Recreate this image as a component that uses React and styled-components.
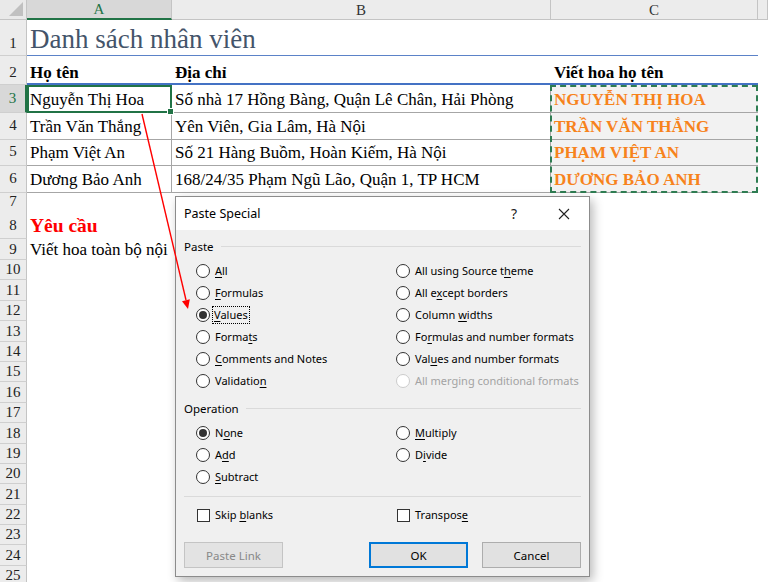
import React from 'react';
import styled, { createGlobalStyle } from 'styled-components';

const GlobalStyle = createGlobalStyle`
  html, body {
    margin: 0;
    padding: 0;
    background: #fff;
  }
  body {
    width: 768px;
    height: 582px;
    overflow: hidden;
    font-family: "Liberation Serif", "Times New Roman", serif;
  }
`;

const COLS = '27px 145px 379px 207px 1fr';

const Page = styled.div`
  position: relative;
  width: 768px;
  height: 582px;
  overflow: hidden;
`;

const Sheet = styled.div`
  display: flex;
  flex-direction: column;
`;

const Row = styled.div`
  display: grid;
  grid-template-columns: ${COLS};
  height: ${p => p.$h}px;
  flex: none;
`;

const Corner = styled.div`
  position: relative;
  background: #e9e9e9;
  border-right: 1px solid #c4c4c4;
  border-bottom: 1px solid #c4c4c4;
  &::after {
    content: '';
    position: absolute;
    right: 3px;
    bottom: 3px;
    border-left: 14px solid transparent;
    border-bottom: 14px solid #c0c0c0;
  }
`;

const ColHead = styled.div`
  box-sizing: border-box;
  display: flex;
  align-items: center;
  justify-content: center;
  background: ${p => (p.$active ? '#d8d8d8' : '#ececec')};
  color: ${p => (p.$active ? '#217346' : '#333')};
  border-right: 1px solid #c4c4c4;
  border-bottom: ${p => (p.$active ? '2px solid #217346' : '1px solid #c4c4c4')};
  font-size: 15px;
  padding-top: 1px;
`;

const RowHead = styled.div`
  box-sizing: border-box;
  display: flex;
  align-items: flex-end;
  justify-content: center;
  padding-bottom: ${p => p.$pb ?? 1}px;
  background: ${p => (p.$active ? '#d8d8d8' : '#ececec')};
  color: ${p => (p.$active ? '#217346' : '#222')};
  border-right: ${p => (p.$active ? '2px solid #217346' : '1px solid #c4c4c4')};
  border-bottom: 1px solid #cfcfcf;
  font-size: 15px;
  line-height: 17px;
`;

const Cell = styled.div`
  box-sizing: border-box;
  position: relative;
  display: flex;
  align-items: flex-end;
  padding: 0 0 ${p => p.$pb ?? 3}px 3px;
  white-space: nowrap;
  font-size: ${p => p.$size ?? 17}px;
  line-height: ${p => (p.$size ? p.$size + 3 : 19)}px;
  font-weight: ${p => (p.$bold ? 700 : 400)};
  color: ${p => p.$color ?? '#000'};
  background: ${p => p.$bg ?? 'transparent'};
  border-bottom: ${p => p.$bb ?? 'none'};
  border-right: ${p => p.$br ?? 'none'};
  z-index: ${p => (p.$over ? 1 : 0)};
`;

const ActiveCell = styled(Cell)`
  outline: 2px solid #217346;
  outline-offset: -2px;
  z-index: 2;
  &::after {
    content: '';
    position: absolute;
    right: -3px;
    bottom: -3px;
    width: 5px;
    height: 5px;
    background: #217346;
    border: 1px solid #fff;
  }
`;

const Marquee = styled.div`
  position: absolute;
  left: 550px;
  top: 85px;
  width: 208px;
  height: 108px;
  box-sizing: border-box;
  border: 2px dashed #2e7d52;
  pointer-events: none;
`;

const Overlay = styled.svg`
  position: absolute;
  left: 0;
  top: 0;
  pointer-events: none;
  z-index: 5;
`;

/* ---------- dialog ---------- */

const Dialog = styled.div`
  position: absolute;
  left: 175px;
  top: 196px;
  width: 415px;
  height: 381px;
  box-sizing: border-box;
  border: 1px solid #8c8c8c;
  background: #f0f0f0;
  box-shadow: 3px 4px 10px rgba(0, 0, 0, 0.28);
  font-family: "Noto Sans", "Open Sans", sans-serif;
  font-size: 11px;
  color: #000;
  display: flex;
  flex-direction: column;
  z-index: 3;
`;

const TitleBar = styled.div`
  height: 33px;
  flex: none;
  background: #fff;
  display: flex;
  align-items: center;
  padding-left: 8px;
  font-size: 12.5px;
`;

const Title = styled.div`
  flex: 1;
`;

const TitleBtn = styled.div`
  width: 50px;
  height: 33px;
  display: flex;
  align-items: center;
  justify-content: center;
  font-size: 14px;
  color: #222;
`;

const Body = styled.div`
  padding: 0 8px;
  display: flex;
  flex-direction: column;
`;

const SectionHead = styled.div`
  display: flex;
  align-items: center;
  gap: 7px;
  height: 22px;
  margin-top: 5px;
  font-size: 11.5px;
  &::after {
    content: '';
    flex: 1;
    border-top: 1px solid #dadada;
    margin-top: 1px;
  }
`;

const OptionGrid = styled.div`
  display: grid;
  grid-template-columns: 200px 1fr;
  grid-auto-rows: 22px;
  padding-left: 12px;
  margin-top: ${p => p.$mt ?? 3}px;
`;

const Option = styled.div`
  display: flex;
  align-items: center;
  gap: 5px;
  color: ${p => (p.$disabled ? '#a3a3a3' : '#000')};
  white-space: nowrap;
`;

const Radio = styled.span`
  box-sizing: border-box;
  width: 14px;
  height: 14px;
  flex: none;
  border-radius: 50%;
  border: 1px solid ${p => (p.$disabled ? '#cccccc' : '#333')};
  background: #fff;
  display: flex;
  align-items: center;
  justify-content: center;
  &::after {
    content: '';
    display: ${p => (p.$checked ? 'block' : 'none')};
    width: 8px;
    height: 8px;
    border-radius: 50%;
    background: #333;
  }
`;

const Check = styled.span`
  box-sizing: border-box;
  width: 13px;
  height: 13px;
  flex: none;
  margin-left: 1px;
  border: 1px solid #333;
  background: #fff;
`;

const Label = styled.span`
  outline: ${p => (p.$focus ? '1px dotted #000' : 'none')};
  padding: ${p => (p.$focus ? '0 1px' : '0')};
  margin-left: ${p => (p.$focus ? '-2px' : '0')};
  line-height: 16px;
`;

const Key = styled.span`
  text-decoration: underline;
  text-underline-offset: 2px;
`;

const Divider = styled.div`
  border-top: 1px solid #dadada;
  margin-top: 8px;
`;

const ButtonRow = styled.div`
  display: flex;
  justify-content: space-between;
  margin-top: 16px;
`;

const ButtonGroup = styled.div`
  display: flex;
  gap: 14px;
`;

const Button = styled.div`
  box-sizing: border-box;
  width: 99px;
  height: 26px;
  display: flex;
  align-items: center;
  justify-content: center;
  font-size: 11.5px;
  background: ${p => (p.$disabled ? '#e3e3e3' : '#e1e1e1')};
  color: ${p => (p.$disabled ? '#888' : '#000')};
  border: ${p =>
    p.$primary ? '2px solid #0078d7' : p.$disabled ? '1px solid #c4c4c4' : '1px solid #adadad'};
`;

const rowsAfter = Array.from({ length: 16 }, (_, i) => i + 10);

const pasteOptions = [
  [<><Key>A</Key>ll</>],
  [<>All using Source t<Key>h</Key>eme</>],
  [<><Key>F</Key>ormulas</>],
  [<>All e<Key>x</Key>cept borders</>],
  [<><Key>V</Key>alues</>, { checked: true, focus: true }],
  [<>Column <Key>w</Key>idths</>],
  [<>Forma<Key>t</Key>s</>],
  [<>Fo<Key>r</Key>mulas and number formats</>],
  [<><Key>C</Key>omments and Notes</>],
  [<>Val<Key>u</Key>es and number formats</>],
  [<>Validatio<Key>n</Key></>],
  [<>All merging conditional formats</>, { disabled: true }],
];

const opOptions = [
  [<>N<Key>o</Key>ne</>, { checked: true }],
  [<><Key>M</Key>ultiply</>],
  [<>A<Key>d</Key>d</>],
  [<>D<Key>i</Key>vide</>],
  [<><Key>S</Key>ubtract</>],
];

const data = [
  ['Nguyễn Thị Hoa', 'Số nhà 17 Hồng Bàng, Quận Lê Chân, Hải Phòng', 'NGUYỄN THỊ HOA', 28],
  ['Trần Văn Thắng', 'Yên Viên, Gia Lâm, Hà Nội', 'TRẦN VĂN THẮNG', 27],
  ['Phạm Việt An', 'Số 21 Hàng Buồm, Hoàn Kiếm, Hà Nội', 'PHẠM VIỆT AN', 26],
  ['Dương Bảo Anh', '168/24/35 Phạm Ngũ Lão, Quận 1, TP HCM', 'DƯƠNG BẢO ANH', 27],
];

const GRID = '1px solid #a6a6a6';

function OptionList({ items }) {
  return items.map(([label, opt = {}], i) => (
    <Option key={i} $disabled={opt.disabled}>
      <Radio $checked={opt.checked} $disabled={opt.disabled} />
      <Label $focus={opt.focus}>{label}</Label>
    </Option>
  ));
}

export default function App() {
  return (
    <Page>
      <GlobalStyle />
      <Sheet>
        <Row $h={20}>
          <Corner />
          <ColHead $active>A</ColHead>
          <ColHead>B</ColHead>
          <ColHead>C</ColHead>
          <ColHead />
        </Row>
        <Row $h={36}>
          <RowHead $pb={3}>1</RowHead>
          <Cell $size={27} $color="#44546a" $pb={1} $bb="1px solid #5b82c8" $over>Danh sách nhân viên</Cell>
          <Cell $bb="1px solid #5b82c8" />
          <Cell $bb="1px solid #5b82c8" />
          <Cell />
        </Row>
        <Row $h={29}>
          <RowHead $pb={3}>2</RowHead>
          <Cell $bold $bb="2px solid #4472c4" $pb={1}>Họ tên</Cell>
          <Cell $bold $bb="2px solid #4472c4" $pb={1}>Địa chỉ</Cell>
          <Cell $bold $bb="2px solid #4472c4" $pb={1}>Viết hoa họ tên</Cell>
          <Cell />
        </Row>
        {data.map(([name, addr, upper, h], i) => {
          const NameCell = i === 0 ? ActiveCell : Cell;
          return (
            <Row $h={h} key={name}>
              <RowHead $active={i === 0} $pb={5}>{i + 3}</RowHead>
              <NameCell $bb={GRID} $br={GRID} $pb={3}>{name}</NameCell>
              <Cell $bb={GRID} $br={GRID} $pb={3}>{addr}</Cell>
              <Cell $bb={GRID} $bg="#f2f2f2" $bold $color="#f7831c" $pb={3}>{upper}</Cell>
              <Cell />
            </Row>
          );
        })}
        <Row $h={17}>
          <RowHead>7</RowHead>
          <Cell /><Cell /><Cell /><Cell />
        </Row>
        <Row $h={29}>
          <RowHead $pb={4}>8</RowHead>
          <Cell $size={19.5} $bold $color="#ff0000" $pb={2}>Yêu cầu</Cell>
          <Cell /><Cell /><Cell />
        </Row>
        <Row $h={21}>
          <RowHead>9</RowHead>
          <Cell $pb={1}>Viết hoa toàn bộ nội</Cell>
          <Cell /><Cell /><Cell />
        </Row>
        {rowsAfter.map(n => (
          <Row $h={20.4} key={n}>
            <RowHead>{n}</RowHead>
            <Cell /><Cell /><Cell /><Cell />
          </Row>
        ))}
      </Sheet>

      <Marquee />

      <Dialog>
        <TitleBar>
          <Title>Paste Special</Title>
          <TitleBtn>?</TitleBtn>
          <TitleBtn>
            <svg width="12" height="12" viewBox="0 0 12 12">
              <path d="M1 1 L11 11 M11 1 L1 11" stroke="#222" strokeWidth="1.1" fill="none" />
            </svg>
          </TitleBtn>
        </TitleBar>
        <Body>
          <SectionHead>Paste</SectionHead>
          <OptionGrid>
            <OptionList items={pasteOptions} />
          </OptionGrid>
          <SectionHead>Operation</SectionHead>
          <OptionGrid>
            <OptionList items={opOptions} />
          </OptionGrid>
          <Divider />
          <OptionGrid $mt={7}>
            <Option>
              <Check />
              <Label>Skip <Key>b</Key>lanks</Label>
            </Option>
            <Option>
              <Check />
              <Label>Transpos<Key>e</Key></Label>
            </Option>
          </OptionGrid>
          <ButtonRow>
            <Button $disabled>Paste Link</Button>
            <ButtonGroup>
              <Button $primary>OK</Button>
              <Button>Cancel</Button>
            </ButtonGroup>
          </ButtonRow>
        </Body>
      </Dialog>

      <Overlay width="768" height="582" viewBox="0 0 768 582">
        <line x1="142" y1="114" x2="186" y2="300" stroke="#ff0000" strokeWidth="1.4" />
        <polygon points="182,301.2 189.8,299.3 188,309" fill="#ff0000" />
      </Overlay>
    </Page>
  );
}
